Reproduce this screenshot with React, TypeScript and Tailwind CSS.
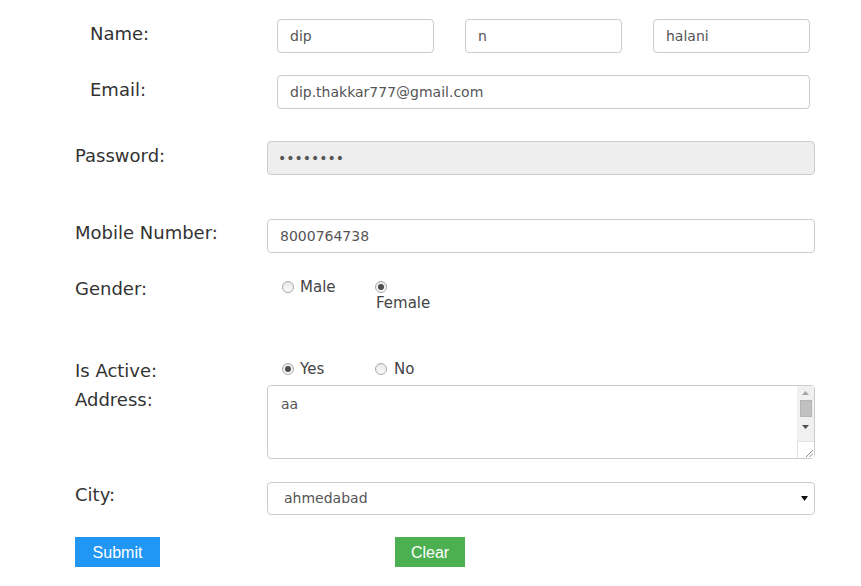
import React from 'react';

const labelCls = "text-[18px] leading-[21px] text-[#333]";
const fieldCls =
  "h-[34px] w-full rounded-[4px] border border-[#ccc] px-[12px] text-[14px] text-[#555] outline-none";
const inputCls = `${fieldCls} bg-white`;

const Radio = ({ checked }: { checked?: boolean }) => (
  <span className="mt-[3px] flex h-[12px] w-[12px] shrink-0 items-center justify-center rounded-full border border-[#a9a9a9] bg-gradient-to-b from-[#e8e8e8] to-[#fafafa]">
    {checked && <span className="h-[6px] w-[6px] rounded-full bg-[#4d4d4d]" />}
  </span>
);

export default function App() {
  return (
    <div
      className="min-h-[586px] w-[861px] bg-white"
      style={{ fontFamily: '"DejaVu Sans", Verdana, sans-serif' }}
    >
      <div className="w-[815px] pl-[75px]">
        {/* Name / email group */}
        <div className="pl-[15px] pr-[5px] pt-[19px]">
          <div className="flex items-start">
            <div className={`${labelCls} w-[187px] shrink-0 pt-[4px]`}>Name:</div>
            <div className="flex flex-1 gap-[31px]">
              <input className={inputCls} defaultValue="dip" />
              <input className={inputCls} defaultValue="n" />
              <input className={inputCls} defaultValue="halani" />
            </div>
          </div>
          <div className="mt-[22px] flex items-start">
            <div className={`${labelCls} w-[187px] shrink-0 pt-[4px]`}>Email:</div>
            <input className={inputCls} defaultValue="dip.thakkar777@gmail.com" />
          </div>
        </div>

        {/* Password */}
        <div className="mt-[32px] flex items-start">
          <div className={`${labelCls} w-[192px] shrink-0 pt-[4px]`}>Password:</div>
          <input
            type="password"
            readOnly
            className="h-[34px] w-full rounded-[4px] border border-[#ccc] bg-[#eeeeee] px-[10px] text-[14px] text-[#555] outline-none"
            defaultValue="12345678"
          />
        </div>

        {/* Mobile */}
        <div className="mt-[44px] flex items-start">
          <div className={`${labelCls} w-[192px] shrink-0 pt-[3px]`}>Mobile Number:</div>
          <input className={inputCls} defaultValue="8000764738" />
        </div>

        {/* Gender */}
        <div className="mt-[25px] flex items-start">
          <div className={`${labelCls} w-[192px] shrink-0`}>Gender:</div>
          <div className="flex pl-[15px] text-[15px] leading-[18px] text-[#444]">
            <label className="flex w-[93px] items-start gap-[6px]">
              <Radio />
              <span>Male</span>
            </label>
            <label className="flex flex-col items-start">
              <span className="h-[16px]">
                <Radio checked />
              </span>
              <span className="pl-[1px]">Female</span>
            </label>
          </div>
        </div>

        {/* Is Active */}
        <div className="mt-[48px] flex items-start">
          <div className={`${labelCls} w-[192px] shrink-0`}>Is Active:</div>
          <div className="flex pl-[15px] text-[15px] leading-[18px] text-[#444]">
            <label className="flex w-[93px] items-start gap-[6px]">
              <Radio checked />
              <span>Yes</span>
            </label>
            <label className="flex items-start gap-[7px]">
              <Radio />
              <span>No</span>
            </label>
          </div>
        </div>

        {/* Address */}
        <div className="mt-[4px] flex items-start">
          <div className={`${labelCls} w-[192px] shrink-0 pt-[4px]`}>Address:</div>
          <div className="relative h-[74px] flex-1">
            <textarea
              className="h-full w-full resize-none overflow-hidden rounded-[4px] border border-[#ccc] bg-white py-[8px] pl-[13px] pr-[24px] text-[14px] leading-[20px] text-[#555] outline-none"
              defaultValue="aa"
            />
            {/* scrollbar */}
            <div className="absolute right-[1px] top-[1px] flex w-[17px] flex-col">
              <div className="flex h-[55px] flex-col items-center bg-[#f0f0f0]">
                <svg width="7" height="4" viewBox="0 0 7 4" className="mt-[5px]">
                  <path d="M0 4 L3.5 0 L7 4 Z" fill="#a3a3a3" />
                </svg>
                <div className="mt-[5px] h-[17px] w-[12px] border border-[#b5b5b5] bg-[#c1c1c1]" />
                <svg width="7" height="4" viewBox="0 0 7 4" className="mt-[8px]">
                  <path d="M0 0 L7 0 L3.5 4 Z" fill="#505050" />
                </svg>
              </div>
              <div className="relative h-[17px] border-l border-t border-[#e2e2e2] bg-white">
                <svg width="8" height="8" viewBox="0 0 8 8" className="absolute bottom-[1px] right-[1px]">
                  <path d="M1 8 L8 1 M4.5 8 L8 4.5" stroke="#888" strokeWidth="1" />
                </svg>
              </div>
            </div>
          </div>
        </div>

        {/* City */}
        <div className="mt-[23px] flex items-start">
          <div className={`${labelCls} w-[192px] shrink-0 pt-[2px]`}>City:</div>
          <div className="relative flex-1">
            <select
              className="h-[33px] w-full appearance-none rounded-[4px] border border-[#ccc] bg-white pl-[16px] text-[14px] text-[#555] outline-none"
              defaultValue="ahmedabad"
            >
              <option value="ahmedabad">ahmedabad</option>
            </select>
            <svg
              width="7"
              height="5"
              viewBox="0 0 7 5"
              className="pointer-events-none absolute right-[7px] top-[14px]"
            >
              <path d="M0 0 L7 0 L3.5 5 Z" fill="#111" />
            </svg>
          </div>
        </div>

        {/* Buttons */}
        <div
          className="mt-[22px] flex items-start"
          style={{ fontFamily: '"Liberation Sans", Arial, sans-serif' }}
        >
          <button className="h-[30px] w-[85px] bg-[#2196f3] pt-[1px] text-[16px] text-white">Submit</button>
          <button className="ml-[235px] h-[30px] w-[70px] bg-[#4caf50] pt-[1px] text-[16px] text-white">
            Clear
          </button>
        </div>
      </div>
    </div>
  );
}
